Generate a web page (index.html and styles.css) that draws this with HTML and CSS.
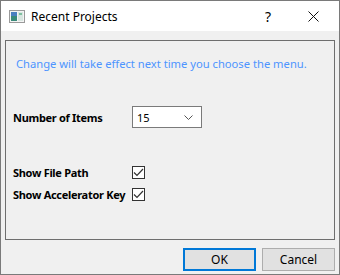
FILE: index.html
```html
<!DOCTYPE html>
<html lang="en">
<head>
    <meta charset="UTF-8">
    <title>Recent Projects</title>
    <link rel="stylesheet" href="styles.css">
</head>
<body>
    <div class="window">
        <div class="titleBar">
            <svg class="appIcon" width="16" height="13" viewBox="0 0 16 13">
                <rect x="0.5" y="0.5" width="15" height="12" fill="#f4f4f4" stroke="#9a9a9a"/>
                <rect x="2" y="2" width="6" height="9" fill="#3a8a7a"/>
                <rect x="2" y="2" width="6" height="4" fill="#4a7fc0"/>
                <rect x="9" y="2" width="5" height="9" fill="#d8e6e0"/>
                <rect x="10" y="3" width="3" height="2" fill="#7fc0a0"/>
            </svg>
            <span class="title">Recent Projects</span>
            <span class="helpBtn">?</span>
            <svg class="closeBtn" width="11" height="11" viewBox="0 0 11 11">
                <path d="M0.5 0.5 L10.5 10.5 M10.5 0.5 L0.5 10.5" stroke="#111" stroke-width="1"/>
            </svg>
        </div>
        <div class="dialogBody">
            <div class="group">
                <p class="notice">Change will take effect next time you choose the menu.</p>
                <div class="row itemsRow">
                    <span class="label">Number of Items</span>
                    <div class="combo">
                        <span>15</span>
                        <svg width="9" height="5" viewBox="0 0 9 5">
                            <path d="M0.5 0.5 L4.5 4.5 L8.5 0.5" fill="none" stroke="#555"/>
                        </svg>
                    </div>
                </div>
                <div class="row checkRow first">
                    <span class="label">Show File Path</span>
                    <span class="check"><svg width="11" height="9" viewBox="0 0 11 9"><path d="M1 4.5 L4 7.5 L10 1" fill="none" stroke="#333" stroke-width="1.2"/></svg></span>
                </div>
                <div class="row checkRow">
                    <span class="label">Show Accelerator Key</span>
                    <span class="check"><svg width="11" height="9" viewBox="0 0 11 9"><path d="M1 4.5 L4 7.5 L10 1" fill="none" stroke="#333" stroke-width="1.2"/></svg></span>
                </div>
            </div>
            <div class="buttons">
                <button class="btn okBtn">OK</button>
                <button class="btn">Cancel</button>
            </div>
        </div>
    </div>
</body>
</html>
```
FILE: styles.css
```css
body{
    margin: 0px;
    font-family: "Noto Sans", "Open Sans", sans-serif;
    font-size: 11px;
    color: #000;
}
.window{
    width: 340px;
    height: 275px;
    box-sizing: border-box;
    border: 1px solid #7a7a7a;
    background-color: #f0f0f0;
    display: flex;
    flex-direction: column;
}
.titleBar{
    height: 30px;
    background-color: #fff;
    display: flex;
    align-items: center;
    font-size: 12px;
}
.appIcon{
    margin-left: 8px;
}
.title{
    margin-left: 6px;
    flex: 1;
}
.helpBtn{
    font-size: 14px;
    margin-right: 37px;
}
.closeBtn{
    margin-right: 20px;
}
.dialogBody{
    flex: 1;
    padding: 9px 4px 0 4px;
    display: flex;
    flex-direction: column;
}
.group{
    height: 200px;
    box-sizing: border-box;
    border: 1px solid #6e6e6e;
    padding: 0 0 0 7px;
}
.notice{
    margin: 15px 0 0 3px;
    color: #4d94ff;
    font-size: 11.2px;
    white-space: nowrap;
}
.row{
    display: flex;
    align-items: center;
}
.label{
    width: 119px;
    font-weight: bold;
    letter-spacing: -0.3px;
    white-space: nowrap;
}
.itemsRow{
    margin-top: 35px;
}
.combo{
    width: 70px;
    height: 22px;
    box-sizing: border-box;
    border: 1px solid #7a7a7a;
    background-color: #fff;
    display: flex;
    align-items: center;
    justify-content: space-between;
    padding: 0 8px 0 4px;
}
.checkRow{
    height: 22px;
}
.checkRow.first{
    margin-top: 33px;
}
.check{
    width: 13px;
    height: 13px;
    box-sizing: border-box;
    border: 1px solid #333;
    background-color: #fff;
    display: flex;
    align-items: center;
    justify-content: center;
}
.buttons{
    display: flex;
    justify-content: flex-end;
    gap: 6px;
    margin-top: 8px;
}
.btn{
    width: 73px;
    height: 23px;
    box-sizing: border-box;
    border: 1px solid #adadad;
    background-color: #e1e1e1;
    font-family: "Noto Sans", "Open Sans", sans-serif;
    font-size: 12px;
    padding: 0;
}
.okBtn{
    border: 2px solid #0078d7;
}
```
